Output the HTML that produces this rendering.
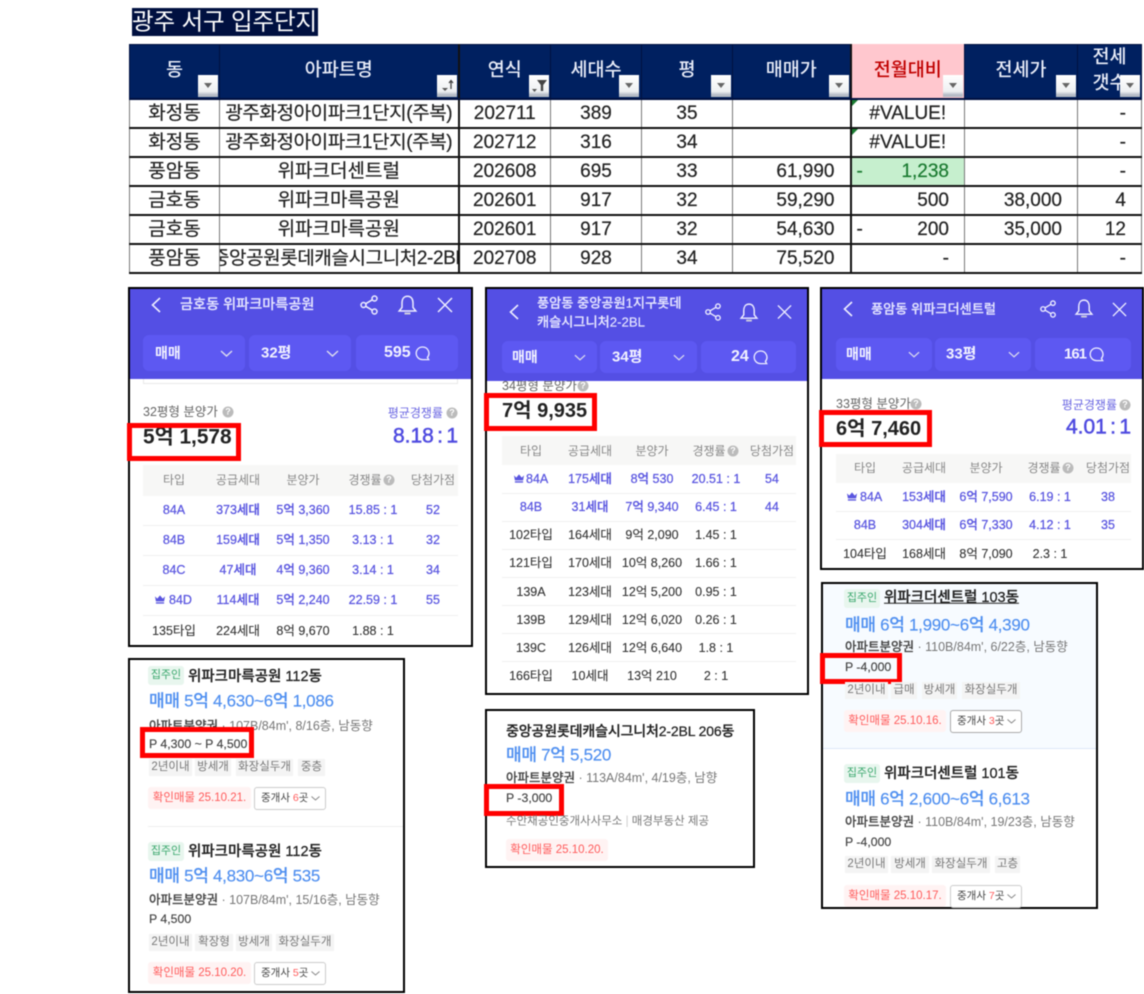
<!DOCTYPE html>
<html lang="ko"><head><meta charset="utf-8"><title>광주 서구 입주단지</title>
<style>
html,body{margin:0;padding:0;background:#fff}
#p{position:relative;width:1144px;height:994px;overflow:hidden;background:#fff;font-family:"Liberation Sans","Noto Sans CJK KR",sans-serif;filter:blur(.45px)}
.l,.c,.r{position:absolute;white-space:nowrap;line-height:1}
.l{transform:translateY(-50%)}.c{transform:translate(-50%,-50%)}.r{transform:translate(-100%,-50%)}
.b{position:absolute;box-sizing:border-box}
.panel{border:2px solid #000;background:#fff}
.hd{background:#544fe4}
.btn{background:#5d58f2;border-radius:6px}
.ttl{font-size:14.2px;color:#e6e6ff;font-weight:500;-webkit-text-stroke:.15px #e6e6ff}
.bt{font-size:15px;font-weight:700;color:#f2f2ff}
.sub{font-size:12.5px;color:#666}
.avg{font-size:12px;color:#6a66e2}
.big{font-size:20px;font-weight:700;color:#222}
.rate{font-size:21px;font-weight:400;color:#4f4be0;word-spacing:-2.5px;-webkit-text-stroke:.5px #4f4be0}
.th{background:#f7f7f6}
.h{font-size:12px;color:#888}
.p{font-size:12.5px;font-weight:500;color:#5a56e0;-webkit-text-stroke:.25px #5a56e0}
.k{font-size:12.5px;color:#333;-webkit-text-stroke:.1px #333}
.sep{position:absolute;height:1px;background:#f0f0f0}
.red{position:absolute;box-sizing:border-box;border:5px solid #f00}
.q{position:absolute;width:11px;height:11px;border-radius:50%;background:#bbb;color:#fff;font-size:9px;line-height:11px;text-align:center;font-weight:700;transform:translate(-50%,-50%)}
.tg{position:absolute;box-sizing:border-box;background:#e8f6ee;color:#3aa76d;font-size:11px;border-radius:3px;text-align:center;height:19px;line-height:18px;width:36px}
.tt{font-size:14.5px;font-weight:500;color:#222;-webkit-text-stroke:.25px #222}
.pr{font-size:17px;letter-spacing:-.3px;color:#4f8ff0;font-weight:500;-webkit-text-stroke:.15px #4f8ff0}
.ln{font-size:12.5px;color:#777}.ln b{font-weight:500;color:#444;-webkit-text-stroke:.15px #444}
.pp{font-size:12.3px;color:#444;-webkit-text-stroke:.15px #444}
.tag{position:absolute;box-sizing:border-box;background:#f4f4f4;color:#777;font-size:11.5px;height:17px;line-height:17px;text-align:center;white-space:nowrap;overflow:hidden}
.rt{position:absolute;box-sizing:border-box;width:103px;height:22px;background:#fff3f3;color:#ff5a5a;font-size:11.5px;line-height:22px;text-align:center;border-radius:3px;white-space:nowrap}
.bk{position:absolute;box-sizing:border-box;width:72px;height:23px;border:1px solid #ccc;border-radius:3px;background:#fff;color:#444;font-size:10.5px;line-height:21px;padding-left:6px;white-space:nowrap}
.bk i{font-style:normal;color:#ff5a5a}
.bk svg{position:absolute;right:5px;top:8px}
table{position:absolute;left:129px;top:44px;width:1012px;height:228px;border-collapse:collapse;table-layout:fixed}
td,th{padding:0;height:29px;box-sizing:border-box;border:1px solid #777;border-bottom:2px solid #111;font-size:19px;font-weight:400;color:#222;text-align:center;overflow:hidden;white-space:nowrap;position:relative;line-height:1;-webkit-text-stroke:.2px #222}
th{height:54px;background:#002060;color:#e8ecf8;font-size:18.5px;border-color:#001040;font-weight:500;-webkit-text-stroke:0}
th span{position:relative;top:-1px}
.bl{border-left:2px solid #111}
.nm{text-align:right;padding-right:15px}
.cl{display:flex;justify-content:center;overflow:hidden;letter-spacing:-.4px}
.f{position:absolute;width:20px;height:22px;background:linear-gradient(#fff 0,#eef0f2 75%,#b5bcc6 90%);}
.f.t:after{content:"";position:absolute;left:6px;top:8px;border:4px solid transparent;border-top:5px solid #666;border-bottom:0}
.f svg{position:absolute;left:0;top:0}
.g{position:absolute;left:0;top:0;border-top:6px solid #1b7d32;border-right:6px solid transparent}
</style></head><body><div id="p">
<svg width="0" height="0" style="position:absolute"><defs>
<symbol id="sh" viewBox="0 0 18 20"><g fill="none" stroke="#eef" stroke-width="1.5"><circle cx="14.5" cy="3.5" r="2.5"/><circle cx="3.5" cy="10" r="2.5"/><circle cx="14.5" cy="16.5" r="2.5"/><path d="M5.7 8.7 12.3 4.8M5.7 11.3l6.6 3.9"/></g></symbol>
<symbol id="be" viewBox="0 0 21 20"><g fill="none" stroke="#eef" stroke-width="1.5"><path d="M10.5 1.2C6.5 1.2 5 4.5 5 8v4.5L2.2 16h16.6L16 12.500V8c0-3.500-1.500-6.800-5.500-6.800z"/></g><rect x="7.500" y="17.500" width="6" height="2" fill="#ccd"/></symbol>
<symbol id="xx" viewBox="0 0 16 16"><path d="M1 1l14 14M15 1 1 15" fill="none" stroke="#eef" stroke-width="1.500"/></symbol>
<symbol id="ba" viewBox="0 0 10 16"><path d="M9 1 1.500 8 9 15" fill="none" stroke="#eef" stroke-width="1.600"/></symbol>
<symbol id="dn" viewBox="0 0 13 7"><path d="M1 1l5.500 5L12 1" fill="none" stroke="#dde" stroke-width="1.400"/></symbol>
<symbol id="bu" viewBox="0 0 15 15"><path d="M7.500 1a6.300 6.300 0 1 0 0 12.600h6.200l-1.300-2.200A6.300 6.300 0 0 0 7.500 1z" fill="none" stroke="#eef" stroke-width="1.300"/></symbol>
<symbol id="cr" viewBox="0 0 11 9"><path d="M0 1l2.500 2.500L5.500 0l3 3.500L11 1l-1 5.500H1zM1 7.500h9V9H1z" fill="#5a56e0"/></symbol>
<symbol id="dk" viewBox="0 0 9 5"><path d="M.5.500l4 3.500 4-3.500" fill="none" stroke="#888"/></symbol>
</defs></svg>

<div class="b" style="left:132px;top:8px;width:186px;height:28px;background:#001040"></div>
<div class="l" style="left:132px;top:22px;font-size:23.500px;color:#fff;letter-spacing:-.1px">광주 서구 입주단지</div>

<table>
<colgroup><col style="width:90px"><col style="width:239px"><col style="width:92px"><col style="width:91px"><col style="width:91px"><col style="width:118px"><col style="width:114px"><col style="width:113px"><col style="width:64px"></colgroup>
<tr><th><span>동</span></th><th><span>아파트명</span></th><th class="bl"><span>연식</span></th><th><span>세대수</span></th><th><span>평</span></th><th><span>매매가</span></th><th class="bl" style="background:#ffc7ce;color:#c00000;border-top-color:#ffc7ce"><span>전월대비</span></th><th><span>전세가</span></th><th style="line-height:26px;white-space:normal;font-size:18.500px"><span>전세<br>갯수</span></th></tr>
<tr><td>화정동</td><td><div class="cl"><span>광주화정아이파크1단지(주복)</span></div></td><td class="bl">202711</td><td>389</td><td>35</td><td></td><td class="bl"><i class="g"></i>#VALUE!</td><td></td><td class="nm">-</td></tr>
<tr><td>화정동</td><td><div class="cl"><span>광주화정아이파크1단지(주복)</span></div></td><td class="bl">202712</td><td>316</td><td>34</td><td></td><td class="bl"><i class="g"></i>#VALUE!</td><td></td><td class="nm">-</td></tr>
<tr><td>풍암동</td><td>위파크더센트럴</td><td class="bl">202608</td><td>695</td><td>33</td><td class="nm">61,990</td><td class="bl nm" style="background:#c6efce;color:#1a7a30;-webkit-text-stroke:.2px #1a7a30"><span style="position:absolute;left:5px;top:4px">-</span>1,238</td><td></td><td class="nm">-</td></tr>
<tr><td>금호동</td><td>위파크마륵공원</td><td class="bl">202601</td><td>917</td><td>32</td><td class="nm">59,290</td><td class="bl nm">500</td><td class="nm">38,000</td><td class="nm">4</td></tr>
<tr><td>금호동</td><td>위파크마륵공원</td><td class="bl">202601</td><td>917</td><td>32</td><td class="nm">54,630</td><td class="bl nm"><span style="position:absolute;left:5px;top:4px">-</span>200</td><td class="nm">35,000</td><td class="nm">12</td></tr>
<tr><td>풍암동</td><td><div class="cl"><span>중앙공원롯데캐슬시그니처2-2BL</span></div></td><td class="bl">202708</td><td>928</td><td>34</td><td class="nm">75,520</td><td class="bl nm">-</td><td></td><td class="nm">-</td></tr>
</table>
<i class="f t" style="left:198px;top:75px"></i>
<i class="f" style="left:437px;top:75px"><svg width="20" height="22"><path d="M5 13h6l-3 3z" fill="#555"/><path d="M14 14V6M12 8l2-2.500L16 8" fill="none" stroke="#444" stroke-width="1.300"/></svg></i>
<i class="f" style="left:529px;top:75px"><svg width="20" height="22"><path d="M3 14h5l-2.500 3z" fill="#555"/><path d="M8 5h10l-3.800 5v6h-2.400v-6z" fill="#444"/></svg></i>
<i class="f t" style="left:619px;top:75px"></i><i class="f t" style="left:711px;top:75px"></i><i class="f t" style="left:829px;top:75px"></i><i class="f t" style="left:943px;top:75px"></i><i class="f t" style="left:1056px;top:75px"></i><i class="f t" style="left:1120px;top:75px"></i>

<!-- Panel 1 -->
<div class="b panel" style="left:128px;top:287px;width:345px;height:360px"></div>
<div class="b hd" style="left:130px;top:289px;width:341px;height:90px"></div>
<div class="b btn" style="left:143px;top:335px;width:102px;height:36px"></div>
<div class="b btn" style="left:249px;top:335px;width:102px;height:36px"></div>
<div class="b btn" style="left:356px;top:335px;width:102px;height:36px"></div>
<svg class="b" style="left:151px;top:297px" width="10" height="16"><use href="#ba"/></svg>
<div class="l ttl" style="left:180px;top:305px">금호동 위파크마륵공원</div>
<svg class="b" style="left:360px;top:295px" width="18" height="20"><use href="#sh"/></svg>
<svg class="b" style="left:397px;top:295px" width="21" height="20"><use href="#be"/></svg>
<svg class="b" style="left:437px;top:297px" width="16" height="16"><use href="#xx"/></svg>
<div class="l bt" style="left:155px;top:353px;font-size:14px">매매</div>
<svg class="b" style="left:220px;top:350px" width="13" height="7"><use href="#dn"/></svg>
<div class="l bt" style="left:261px;top:353px">32평</div>
<svg class="b" style="left:326px;top:350px" width="13" height="7"><use href="#dn"/></svg>
<div class="l bt" style="left:384px;top:353px;font-size:16px">595</div>
<svg class="b" style="left:415px;top:346px" width="15" height="15"><use href="#bu"/></svg>
<div class="b" style="left:143px;top:379px;width:315px;height:5px;border:1px solid #e8e8e8;border-top:0"></div>
<div class="l sub" style="left:143px;top:412px">32평형 분양가</div><div class="q" style="left:228px;top:412px">?</div>
<div class="r avg" style="left:443px;top:413px">평균경쟁률</div><div class="q" style="left:452px;top:413px">?</div>
<div class="l big" style="left:143px;top:438px;font-size:20.800px">5억 1,578</div>
<div class="r rate" style="left:458px;top:436px">8.18 : 1</div>
<div class="red" style="left:127px;top:423px;width:114px;height:38px"></div>
<div class="b th" style="left:143px;top:465px;width:315px;height:31px"></div>
<div class="c h" style="left:174px;top:480px">타입</div><div class="c h" style="left:238px;top:480px">공급세대</div><div class="c h" style="left:303px;top:480px">분양가</div><div class="c h" style="left:365px;top:480px">경쟁률</div><div class="q" style="left:389px;top:480px">?</div><div class="c h" style="left:433px;top:480px">당첨가점</div>
<div class="c p" style="left:174px;top:510px">84A</div><div class="c p" style="left:238px;top:510px">373세대</div><div class="c p" style="left:303px;top:510px">5억 3,360</div><div class="c p" style="left:373px;top:510px">15.85 : 1</div><div class="c p" style="left:433px;top:510px">52</div>
<div class="sep" style="left:143px;top:525px;width:315px"></div>
<div class="c p" style="left:174px;top:540px">84B</div><div class="c p" style="left:238px;top:540px">159세대</div><div class="c p" style="left:303px;top:540px">5억 1,350</div><div class="c p" style="left:373px;top:540px">3.13 : 1</div><div class="c p" style="left:433px;top:540px">32</div>
<div class="sep" style="left:143px;top:555px;width:315px"></div>
<div class="c p" style="left:174px;top:570px">84C</div><div class="c p" style="left:238px;top:570px">47세대</div><div class="c p" style="left:303px;top:570px">4억 9,360</div><div class="c p" style="left:373px;top:570px">3.14 : 1</div><div class="c p" style="left:433px;top:570px">34</div>
<div class="sep" style="left:143px;top:585px;width:315px"></div>
<svg class="b" style="left:155px;top:595px" width="10" height="9"><use href="#cr"/></svg><div class="l p" style="left:169px;top:600px">84D</div><div class="c p" style="left:238px;top:600px">114세대</div><div class="c p" style="left:303px;top:600px">5억 2,240</div><div class="c p" style="left:373px;top:600px">22.59 : 1</div><div class="c p" style="left:433px;top:600px">55</div>
<div class="sep" style="left:143px;top:615px;width:315px"></div>
<div class="c k" style="left:174px;top:631px">135타입</div><div class="c k" style="left:238px;top:631px">224세대</div><div class="c k" style="left:303px;top:631px">8억 9,670</div><div class="c k" style="left:373px;top:631px">1.88 : 1</div>

<!-- Panel 2 -->
<div class="b panel" style="left:485px;top:287px;width:324px;height:408px"></div>
<div class="b hd" style="left:487px;top:289px;width:320px;height:92px"></div>
<div class="b btn" style="left:502px;top:341px;width:95px;height:32px"></div>
<div class="b btn" style="left:600px;top:341px;width:97px;height:32px"></div>
<div class="b btn" style="left:701px;top:341px;width:95px;height:32px"></div>
<svg class="b" style="left:509px;top:304px" width="10" height="16"><use href="#ba"/></svg>
<div class="l ttl" style="left:537px;top:303px;font-size:13.200px">풍암동 중앙공원1지구롯데</div>
<div class="l ttl" style="left:537px;top:322px;font-size:13.200px">캐슬시그니처2-2BL</div>
<svg class="b" style="left:704px;top:303px" width="18" height="18"><use href="#sh"/></svg>
<svg class="b" style="left:739px;top:303px" width="20" height="19"><use href="#be"/></svg>
<svg class="b" style="left:777px;top:304px" width="15" height="16"><use href="#xx"/></svg>
<div class="l bt" style="left:512px;top:357px;font-size:14px">매매</div>
<svg class="b" style="left:574px;top:354px" width="12" height="7"><use href="#dn"/></svg>
<div class="l bt" style="left:612px;top:357px">34평</div>
<svg class="b" style="left:673px;top:354px" width="12" height="7"><use href="#dn"/></svg>
<div class="l bt" style="left:731px;top:357px;font-size:16px">24</div>
<svg class="b" style="left:753px;top:350px" width="15" height="15"><use href="#bu"/></svg>
<div class="b" style="left:487px;top:381px;width:320px;height:12px;overflow:hidden"><div class="l sub" style="left:15px;top:5px">34평형 분양가</div><div class="q" style="left:96px;top:5px">?</div></div>
<div class="l big" style="left:502px;top:411px">7억 9,935</div>
<div class="red" style="left:484px;top:393px;width:113px;height:38px"></div>
<div class="b th" style="left:502px;top:436px;width:294px;height:29px"></div>
<div class="c h" style="left:531px;top:451px">타입</div><div class="c h" style="left:590px;top:451px">공급세대</div><div class="c h" style="left:652px;top:451px">분양가</div><div class="c h" style="left:709px;top:451px">경쟁률</div><div class="q" style="left:733px;top:451px">?</div><div class="c h" style="left:772px;top:451px">당첨가점</div>
<svg class="b" style="left:514px;top:474px" width="10" height="9"><use href="#cr"/></svg><div class="l p" style="left:526px;top:479px">84A</div><div class="c p" style="left:590px;top:479px">175세대</div><div class="c p" style="left:652px;top:479px">8억 530</div><div class="c p" style="left:716px;top:479px">20.51 : 1</div><div class="c p" style="left:772px;top:479px">54</div>
<div class="sep" style="left:502px;top:493px;width:294px"></div>
<div class="c p" style="left:531px;top:507px">84B</div><div class="c p" style="left:590px;top:507px">31세대</div><div class="c p" style="left:652px;top:507px">7억 9,340</div><div class="c p" style="left:716px;top:507px">6.45 : 1</div><div class="c p" style="left:772px;top:507px">44</div>
<div class="sep" style="left:502px;top:521px;width:294px"></div>
<div class="c k" style="left:531px;top:535px">102타입</div><div class="c k" style="left:590px;top:535px">164세대</div><div class="c k" style="left:652px;top:535px">9억 2,090</div><div class="c k" style="left:716px;top:535px">1.45 : 1</div>
<div class="sep" style="left:502px;top:549px;width:294px"></div>
<div class="c k" style="left:531px;top:563px">121타입</div><div class="c k" style="left:590px;top:563px">170세대</div><div class="c k" style="left:652px;top:563px">10억 8,260</div><div class="c k" style="left:716px;top:563px">1.66 : 1</div>
<div class="sep" style="left:502px;top:577px;width:294px"></div>
<div class="c k" style="left:531px;top:592px">139A</div><div class="c k" style="left:590px;top:592px">123세대</div><div class="c k" style="left:652px;top:592px">12억 5,200</div><div class="c k" style="left:716px;top:592px">0.95 : 1</div>
<div class="sep" style="left:502px;top:605px;width:294px"></div>
<div class="c k" style="left:531px;top:620px">139B</div><div class="c k" style="left:590px;top:620px">129세대</div><div class="c k" style="left:652px;top:620px">12억 6,020</div><div class="c k" style="left:716px;top:620px">0.26 : 1</div>
<div class="sep" style="left:502px;top:633px;width:294px"></div>
<div class="c k" style="left:531px;top:648px">139C</div><div class="c k" style="left:590px;top:648px">126세대</div><div class="c k" style="left:652px;top:648px">12억 6,640</div><div class="c k" style="left:716px;top:648px">1.8 : 1</div>
<div class="sep" style="left:502px;top:661px;width:294px"></div>
<div class="c k" style="left:531px;top:676px">166타입</div><div class="c k" style="left:590px;top:676px">10세대</div><div class="c k" style="left:652px;top:676px">13억 210</div><div class="c k" style="left:716px;top:676px">2 : 1</div>

<!-- Panel 3 -->
<div class="b panel" style="left:820px;top:287px;width:324px;height:283px"></div>
<div class="b hd" style="left:822px;top:289px;width:320px;height:90px"></div>
<div class="b btn" style="left:836px;top:338px;width:96px;height:33px"></div>
<div class="b btn" style="left:935px;top:338px;width:96px;height:33px"></div>
<div class="b btn" style="left:1035px;top:338px;width:96px;height:33px"></div>
<svg class="b" style="left:843px;top:301px" width="10" height="16"><use href="#ba"/></svg>
<div class="l ttl" style="left:871px;top:309px;font-size:13.200px">풍암동 위파크더센트럴</div>
<svg class="b" style="left:1039px;top:300px" width="18" height="18"><use href="#sh"/></svg>
<svg class="b" style="left:1074px;top:299px" width="20" height="19"><use href="#be"/></svg>
<svg class="b" style="left:1112px;top:302px" width="15" height="15"><use href="#xx"/></svg>
<div class="l bt" style="left:846px;top:354px;font-size:14px">매매</div>
<svg class="b" style="left:908px;top:351px" width="12" height="7"><use href="#dn"/></svg>
<div class="l bt" style="left:946px;top:354px">33평</div>
<svg class="b" style="left:1008px;top:351px" width="12" height="7"><use href="#dn"/></svg>
<div class="l bt" style="left:1064px;top:354px;font-size:15px;letter-spacing:-1px">161</div>
<svg class="b" style="left:1089px;top:347px" width="15" height="15"><use href="#bu"/></svg>
<div class="l sub" style="left:836px;top:404px">33평형 분양가</div><div class="q" style="left:916px;top:404px">?</div>
<div class="r avg" style="left:1117px;top:405px">평균경쟁률</div><div class="q" style="left:1125px;top:405px">?</div>
<div class="l big" style="left:836px;top:429px">6억 7,460</div>
<div class="r rate" style="left:1131px;top:427px">4.01 : 1</div>
<div class="red" style="left:819px;top:410px;width:113px;height:37px"></div>
<div class="b th" style="left:836px;top:454px;width:295px;height:29px"></div>
<div class="c h" style="left:865px;top:468px">타입</div><div class="c h" style="left:924px;top:468px">공급세대</div><div class="c h" style="left:986px;top:468px">분양가</div><div class="c h" style="left:1044px;top:468px">경쟁률</div><div class="q" style="left:1068px;top:468px">?</div><div class="c h" style="left:1108px;top:468px">당첨가점</div>
<svg class="b" style="left:847px;top:492px" width="10" height="9"><use href="#cr"/></svg><div class="l p" style="left:860px;top:497px">84A</div><div class="c p" style="left:924px;top:497px">153세대</div><div class="c p" style="left:986px;top:497px">6억 7,590</div><div class="c p" style="left:1050px;top:497px">6.19 : 1</div><div class="c p" style="left:1108px;top:497px">38</div>
<div class="sep" style="left:836px;top:511px;width:295px"></div>
<div class="c p" style="left:865px;top:525px">84B</div><div class="c p" style="left:924px;top:525px">304세대</div><div class="c p" style="left:986px;top:525px">6억 7,330</div><div class="c p" style="left:1050px;top:525px">4.12 : 1</div><div class="c p" style="left:1108px;top:525px">35</div>
<div class="sep" style="left:836px;top:539px;width:295px"></div>
<div class="c k" style="left:865px;top:554px">104타입</div><div class="c k" style="left:924px;top:554px">168세대</div><div class="c k" style="left:986px;top:554px">8억 7,090</div><div class="c k" style="left:1050px;top:554px">2.3 : 1</div>

<!-- Listing 1 -->
<div class="b panel" style="left:128px;top:658px;width:277px;height:335px"></div>
<div class="tg" style="left:148px;top:666px">집주인</div>
<div class="l tt" style="left:188px;top:677px">위파크마륵공원 112동</div>
<div class="l pr" style="left:149px;top:701px">매매 5억 4,630~6억 1,086</div>
<div class="l ln" style="left:149px;top:726px"><b>아파트분양권</b> · 107B/84m', 8/16층, 남동향</div>
<div class="l pp" style="left:149px;top:744px">P 4,300 ~ P 4,500</div>
<div class="red" style="left:140px;top:727px;width:114px;height:31px"></div>
<div class="tag" style="left:149px;top:759px;width:43px">2년이내</div><div class="tag" style="left:195px;top:759px;width:36px">방세개</div><div class="tag" style="left:236px;top:759px;width:57px">화장실두개</div><div class="tag" style="left:298px;top:759px;width:27px">중층</div>
<div class="rt" style="left:148px;top:787px">확인매물 25.10.21.</div>
<div class="bk" style="left:254px;top:787px">중개사 <i>6</i>곳<svg width="9" height="5"><use href="#dk"/></svg></div>
<div class="b" style="left:148px;top:826px;width:255px;height:1px;background:#eee"></div>
<div class="tg" style="left:148px;top:842px">집주인</div>
<div class="l tt" style="left:188px;top:852px">위파크마륵공원 112동</div>
<div class="l pr" style="left:149px;top:876px">매매 5억 4,830~6억 535</div>
<div class="l ln" style="left:149px;top:900px"><b>아파트분양권</b> · 107B/84m', 15/16층, 남동향</div>
<div class="l pp" style="left:149px;top:919px">P 4,500</div>
<div class="tag" style="left:149px;top:934px;width:43px">2년이내</div><div class="tag" style="left:195px;top:934px;width:38px">확장형</div><div class="tag" style="left:236px;top:934px;width:36px">방세개</div><div class="tag" style="left:276px;top:934px;width:58px">화장실두개</div>
<div class="rt" style="left:148px;top:962px">확인매물 25.10.20.</div>
<div class="bk" style="left:254px;top:962px">중개사 <i>5</i>곳<svg width="9" height="5"><use href="#dk"/></svg></div>

<!-- Listing 2 -->
<div class="b panel" style="left:485px;top:709px;width:270px;height:159px"></div>
<div class="l tt" style="left:506px;top:731px;font-size:14px;letter-spacing:-.15px">중앙공원롯데캐슬시그니처2-2BL 206동</div>
<div class="l pr" style="left:506px;top:755px">매매 7억 5,520</div>
<div class="l ln" style="left:506px;top:778px"><b>아파트분양권</b> · 113A/84m', 4/19층, 남향</div>
<div class="l pp" style="left:506px;top:798px">P -3,000</div>
<div class="red" style="left:484px;top:784px;width:80px;height:32px"></div>
<div class="l" style="left:506px;top:822px;font-size:11.500px;color:#777">수안채공인중개사사무소 <span style="color:#ccc">|</span> 매경부동산 제공</div>
<div class="rt" style="left:506px;top:839px;width:102px">확인매물 25.10.20.</div>

<!-- Listing 3 -->
<div class="b panel" style="left:821px;top:582px;width:277px;height:327px"></div>
<div class="b" style="left:823px;top:584px;width:273px;height:165px;background:#f7fbff;border-bottom:1px solid #dce8f8"></div>
<div class="tg" style="left:844px;top:589px">집주인</div>
<div class="l tt" style="left:884px;top:598px;text-decoration:underline">위파크더센트럴 103동</div>
<div class="l pr" style="left:845px;top:625px">매매 6억 1,990~6억 4,390</div>
<div class="l ln" style="left:845px;top:647px"><b>아파트분양권</b> · 110B/84m', 6/22층, 남동향</div>
<div class="l pp" style="left:845px;top:667px">P -4,000</div>
<div class="red" style="left:820px;top:653px;width:82px;height:31px"></div>
<div class="tag" style="left:845px;top:682px;width:43px">2년이내</div><div class="tag" style="left:891px;top:682px;width:26px">급매</div><div class="tag" style="left:922px;top:682px;width:35px">방세개</div><div class="tag" style="left:962px;top:682px;width:58px">화장실두개</div>
<div class="rt" style="left:844px;top:710px;width:102px">확인매물 25.10.16.</div>
<div class="bk" style="left:950px;top:710px;border-color:#aaa">중개사 <i>3</i>곳<svg width="9" height="5"><use href="#dk"/></svg></div>
<div class="tg" style="left:844px;top:764px">집주인</div>
<div class="l tt" style="left:884px;top:774px">위파크더센트럴 101동</div>
<div class="l pr" style="left:845px;top:799px">매매 6억 2,600~6억 6,613</div>
<div class="l ln" style="left:845px;top:822px"><b>아파트분양권</b> · 110B/84m', 19/23층, 남동향</div>
<div class="l pp" style="left:845px;top:842px">P -4,000</div>
<div class="tag" style="left:845px;top:856px;width:43px">2년이내</div><div class="tag" style="left:891px;top:856px;width:38px">방세개</div><div class="tag" style="left:932px;top:856px;width:58px">화장실두개</div><div class="tag" style="left:995px;top:856px;width:25px">고층</div>
<div class="rt" style="left:844px;top:885px;width:102px">확인매물 25.10.17.</div>
<div class="bk" style="left:950px;top:885px">중개사 <i>7</i>곳<svg width="9" height="5"><use href="#dk"/></svg></div>
</div></body></html>
